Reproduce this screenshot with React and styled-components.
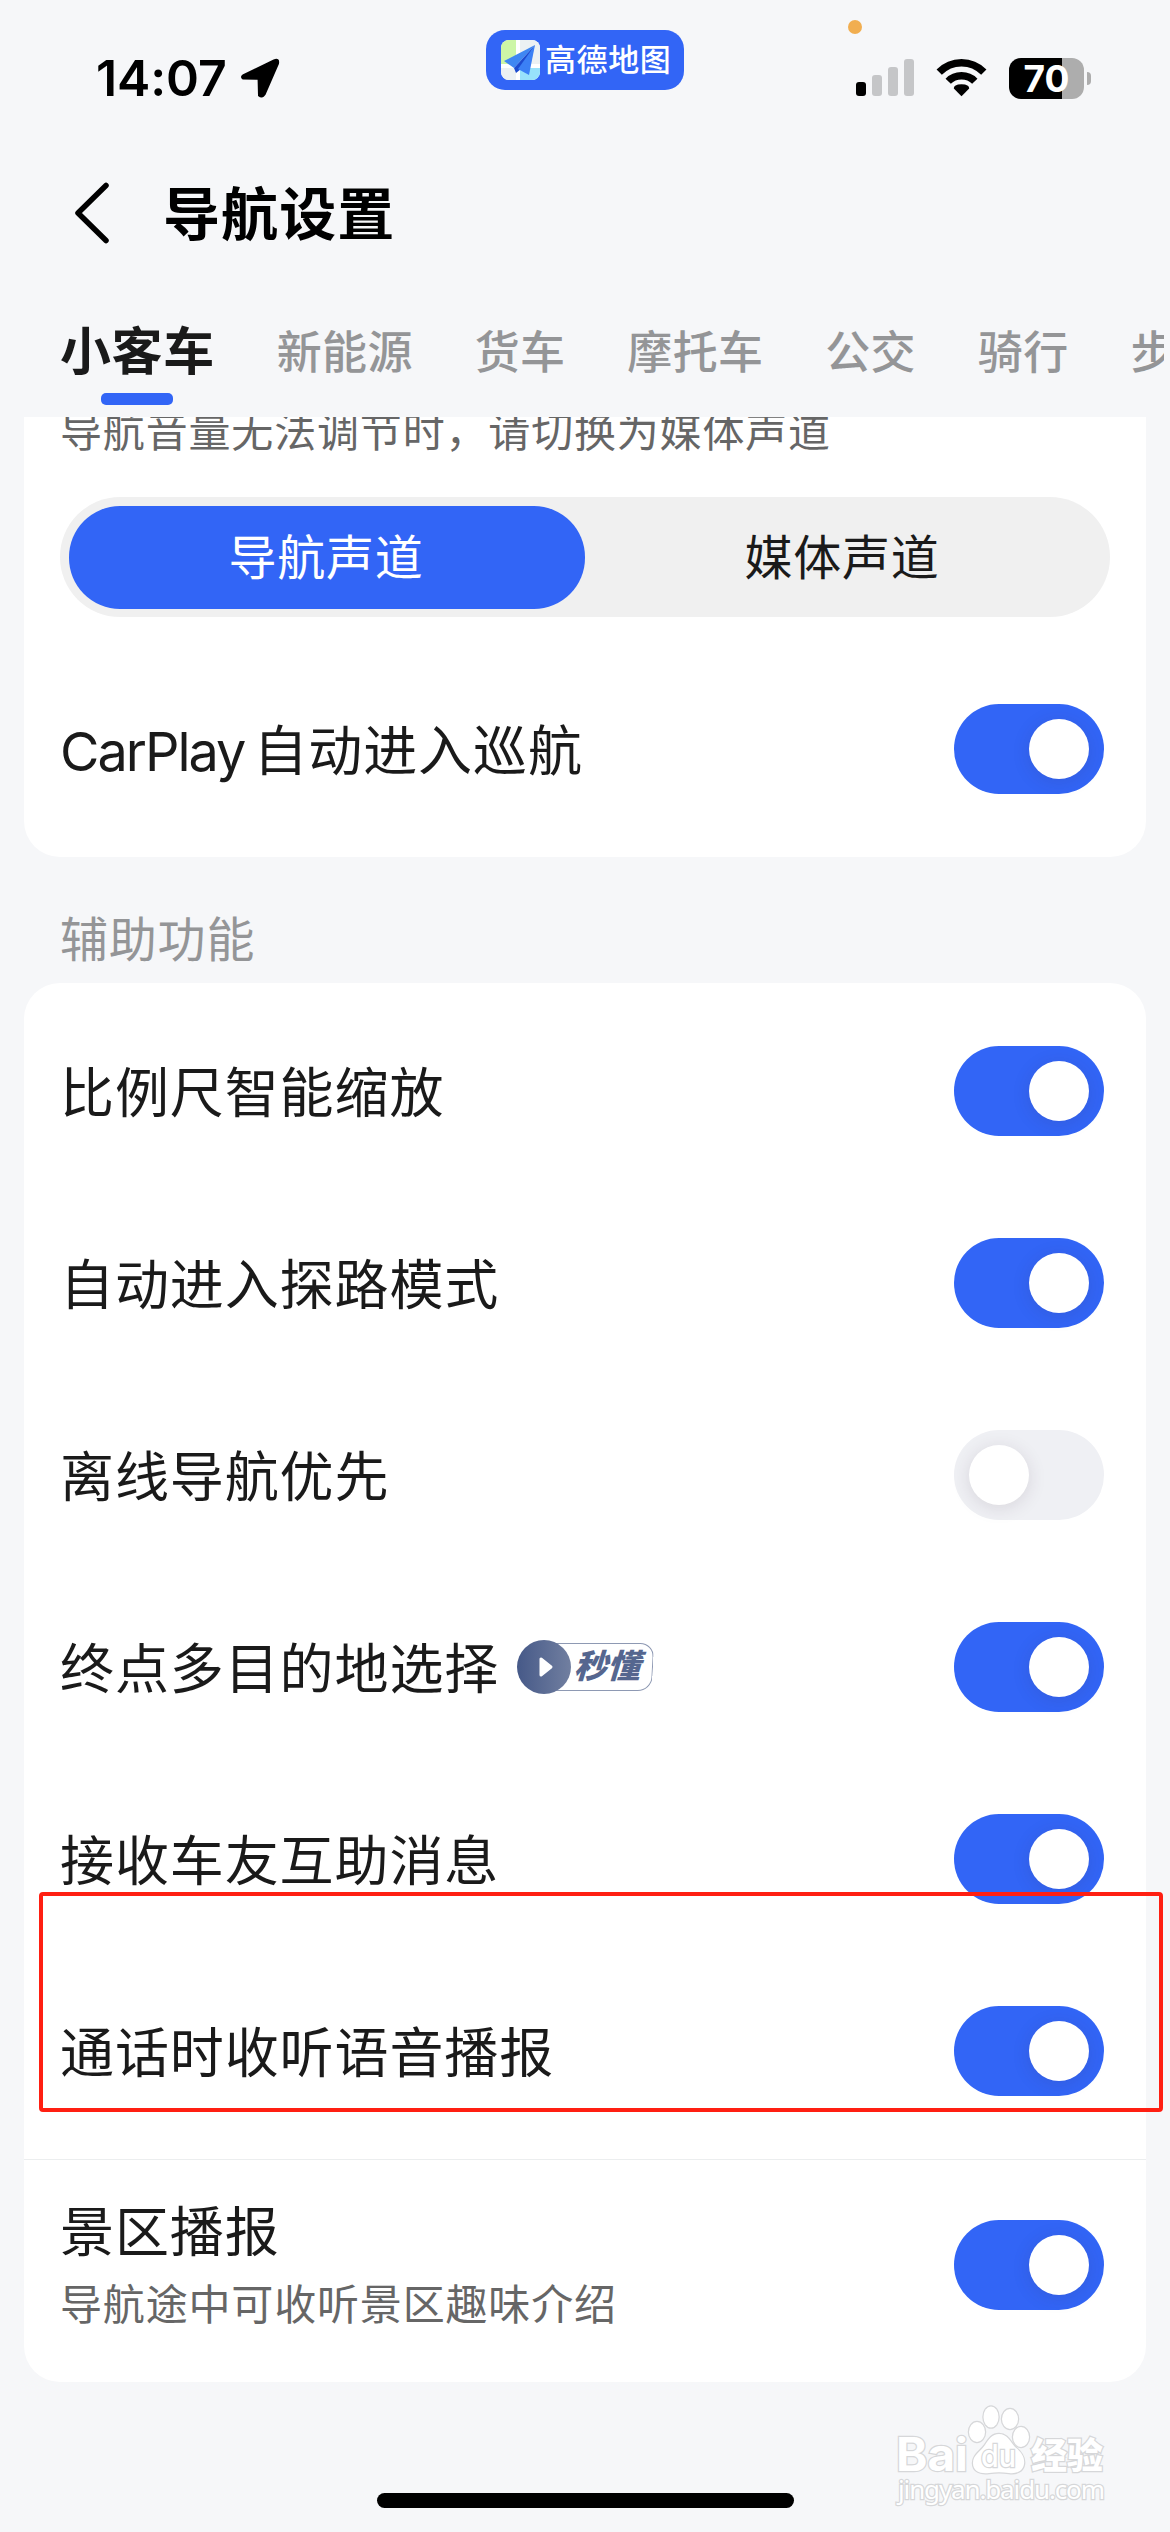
import { useState } from "react";
import styled, { createGlobalStyle, css } from "styled-components";

const GlobalStyle = createGlobalStyle`
  * {
    box-sizing: border-box;
  }
  body {
    margin: 0;
    background-color: #f6f7f9;
    font-family: Inter, "Noto Sans CJK SC", sans-serif;
    color: #1a1a1a;
  }
`;

const Screen = styled.div`
  position: relative;
  width: 1170px;
  height: 2532px;
  overflow: hidden;
  display: flex;
  flex-direction: column;
  background-color: #f6f7f9;
`;

const StatusBar = styled.header`
  height: 153px;
  flex: none;
  display: grid;
  grid-template-columns: 486px 198px 1fr;
  align-items: start;
`;

const Clock = styled.div`
  display: flex;
  align-items: center;
  gap: 13px;
  height: 60px;
  margin: 48px 0 0 96px;
  font-size: 50px;
  font-weight: 600;
  line-height: 60px;
  letter-spacing: -0.1px;
  color: #000;
`;

const AppPill = styled.div`
  display: flex;
  align-items: center;
  gap: 5px;
  height: 60px;
  margin-top: 30px;
  padding-left: 15px;
  border-radius: 19px;
  background-color: #3265f6;
  color: #fff;
  font-size: 31px;
  font-weight: 500;
  line-height: 60px;
  letter-spacing: 0.6px;
  white-space: nowrap;
`;

const StatusIcons = styled.div`
  position: relative;
  display: flex;
  align-items: center;
  height: 42px;
  margin: 57px 0 0 172px;
`;

const MicDot = styled.i`
  position: absolute;
  left: -8px;
  top: -37px;
  width: 14px;
  height: 14px;
  border-radius: 50%;
  background-color: #f1ae50;
`;

const Battery = styled.div`
  width: 75px;
  height: 41px;
  margin-left: 22px;
  border-radius: 12px;
  background: linear-gradient(to right, #000 53px, #adadad 53px);
  color: #fff;
  font-size: 37px;
  font-weight: 700;
  line-height: 42px;
  text-align: center;
`;

const BatteryTip = styled.i`
  width: 4px;
  height: 13px;
  margin-left: 3px;
  border-radius: 0 4px 4px 0;
  background-color: #adadad;
`;

const TitleBar = styled.div`
  height: 120px;
  flex: none;
  display: flex;
  align-items: center;
  padding-left: 74px;
  color: #000;
`;

const Title = styled.h1`
  margin: 3px 0 0 52px;
  font-size: 57px;
  font-weight: 600;
  line-height: 80px;
  letter-spacing: 1.1px;
`;

const Tabs = styled.nav`
  height: 144px;
  width: 1164px;
  flex: none;
  display: flex;
  gap: 62px;
  padding: 38px 0 0 60px;
  overflow: hidden;
`;

const Tab = styled.div`
  flex: none;
  height: 94px;
  display: flex;
  flex-direction: column;
  align-items: center;
  font-size: 45px;
  font-weight: 500;
  line-height: 83px;
  letter-spacing: 0.3px;
  color: #949597;
  ${({ $active }) =>
    $active &&
    css`
      font-size: 51px;
      font-weight: 600;
      line-height: 82px;
      letter-spacing: 0.6px;
      color: #1a1a1a;
      &::after {
        content: "";
        width: 72px;
        height: 12px;
        border-radius: 5px;
        background-color: #3265f6;
      }
    `}
`;

const Content = styled.main`
  height: 2115px;
  overflow: hidden;
  padding: 0 24px;
`;

const Card = styled.section`
  background-color: #fff;
  border-radius: ${({ $clipped }) => ($clipped ? "0 0 36px 36px" : "36px")};
  overflow: hidden;
`;

const Hint = styled.p`
  margin: ${({ $flush }) => ($flush ? "4px 0 0" : "-15px 36px 35px")};
  font-size: 42px;
  line-height: 60px;
  letter-spacing: 0.83px;
  color: #666;
`;

const Segmented = styled.div`
  display: grid;
  grid-template-columns: 1fr 1fr;
  height: 120px;
  margin: 0 36px;
  padding: 9px;
  border-radius: 60px;
  background-color: #f0f0f0;
`;

const Segment = styled.div`
  padding-right: 2px;
  border-radius: 51px;
  font-size: 48px;
  line-height: 103px;
  letter-spacing: 0.8px;
  text-align: center;
  background-color: ${({ $active }) => ($active ? "#3265f6" : "transparent")};
  color: ${({ $active }) => ($active ? "#fff" : "#1a1a1a")};
`;

const Row = styled.div`
  display: flex;
  align-items: center;
  height: 192px;
  padding: 0 42px 0 36px;
`;

const TallRow = styled(Row)`
  height: 210px;
`;

const Group = styled.div`
  padding: ${({ $top = 12 }) => $top}px 0 12px;
`;

const Texts = styled.div`
  margin-top: -6px;
`;

const Label = styled.div`
  padding-top: 5px;
  font-size: 54px;
  line-height: 76px;
  letter-spacing: 0.9px;
`;

const Latin = styled.span`
  margin-right: 9px;
  letter-spacing: -2px;
`;

const SectionTitle = styled.h2`
  height: 126px;
  margin: 0;
  padding: 47px 36px 0;
  font-size: 48px;
  font-weight: 400;
  line-height: 72px;
  letter-spacing: 0.8px;
  color: #949597;
`;

const Divider = styled.hr`
  height: 1px;
  margin: 0;
  border: 0;
  background-color: #eceeef;
`;

const Track = styled.button`
  flex: none;
  width: 150px;
  height: 90px;
  margin-left: auto;
  padding: 15px;
  display: flex;
  justify-content: ${({ $on }) => ($on ? "flex-end" : "flex-start")};
  border: 0;
  border-radius: 45px;
  background-color: ${({ $on }) => ($on ? "#3265f6" : "#eff0f4")};
`;

const Knob = styled.span`
  width: 60px;
  height: 60px;
  border-radius: 50%;
  background-color: #fff;
  box-shadow: 0 3px 18px rgba(60, 40, 60, 0.13);
`;

const Badge = styled.div`
  display: flex;
  align-items: center;
  margin-left: 18px;
`;

const BadgeText = styled.div`
  width: 99px;
  height: 48px;
  margin-left: -17px;
  padding-left: 20px;
  border: 1.5px solid #8e99b3;
  border-left: 0;
  border-radius: 0 14px 14px 0;
  transform: skewX(-3deg);
  color: #55668f;
  font-size: 33px;
  font-weight: 900;
  font-style: italic;
  line-height: 45px;
`;

const PlayIcon = styled.svg`
  position: relative;
  z-index: 1;
`;

const Highlight = styled.div`
  position: absolute;
  left: 39px;
  top: 1892px;
  width: 1124px;
  height: 220px;
  border: 4px solid #ff1f12;
  border-radius: 4px;
`;

const Watermark = styled.svg`
  position: absolute;
  left: 881px;
  top: 2390px;
`;

const HomeIndicator = styled.div`
  position: absolute;
  left: 377px;
  top: 2493px;
  width: 417px;
  height: 15px;
  border-radius: 8px;
  background-color: #000;
`;

const TABS = ["小客车", "新能源", "货车", "摩托车", "公交", "骑行", "步行"];

const OPTIONS = [
  { name: "比例尺智能缩放", on: true },
  { name: "自动进入探路模式", on: true },
  { name: "离线导航优先", on: false },
  { name: "终点多目的地选择", on: true, badge: "秒懂" },
  { name: "接收车友互助消息", on: true },
  { name: "通话时收听语音播报", on: true },
];

const Toggle = ({ initial }) => {
  const [on, setOn] = useState(initial);

  return (
    <Track $on={on} role="switch" aria-checked={on} onClick={() => setOn(!on)}>
      <Knob />
    </Track>
  );
};

const LocationArrow = () => (
  <svg width="40" height="40" viewBox="0 0 40 40">
    <path
      d="M3 17.5 34 2.3Q39 .2 38 5.5L24.5 36.5Q22 40 19 37.5L18.6 22Q18.6 20.7 17.5 20.7L3 20.5Q1 19 3 17.5Z"
      fill="#000"
      stroke="#000"
      strokeWidth="2"
      strokeLinejoin="round"
    />
  </svg>
);

const MapLogo = () => (
  <svg width="39" height="40" viewBox="0 0 39 40">
    <clipPath id="logo">
      <rect width="39" height="40" rx="8" />
    </clipPath>
    <g clipPath="url(#logo)">
      <rect width="39" height="40" fill="#fff" />
      <path d="M0 0h15v24H0z" fill="#cdf6a6" />
      <path d="M19 0h20v24H19zM0 28h15v12H0z" fill="#ecf1f3" />
      <path d="M19 28h20v12H19z" fill="#98e2fb" />
      <path d="M34 5 3 21l10 7z" fill="#3f87f2" />
      <path d="M34 5 13 28l2 5 5-4z" fill="#1c4bd0" />
      <path d="M34 5 17 29l11 6z" fill="#3b80f5" />
    </g>
  </svg>
);

const Signal = () => (
  <svg width="58" height="42" viewBox="0 0 58 42">
    <rect y="25" width="10" height="14" rx="3" fill="#000" />
    <g fill="#c5c6c8">
      <rect x="16" y="18" width="10" height="21" rx="3" />
      <rect x="32" y="10" width="10" height="29" rx="3" />
      <rect x="48" y="2" width="10" height="37" rx="3" />
    </g>
  </svg>
);

const WifiIcon = styled.svg`
  margin-left: 22px;
`;

const Wifi = () => (
  <WifiIcon width="51" height="42" viewBox="0 0 51 42">
    <path d="M25.5 39.3 17.8 31.5Q17.5 27.5 25.5 27.3Q33.500 27.5 33.2 31.5Z" />
    <path d="M3.2 15.2Q12.5 5.7 25.5 5.7T47.8 15.2" fill="none" stroke="#000" strokeWidth="7.4" />
    <path d="M12.2 24.2Q17.5 18.7 25.5 18.7T38.8 24.2" fill="none" stroke="#000" strokeWidth="7.4" />
  </WifiIcon>
);

const BackIcon = () => (
  <svg width="37" height="64" viewBox="0 0 37 64">
    <path
      d="M32 4.5 4 32 32 59.5"
      fill="none"
      stroke="#000"
      strokeWidth="5.5"
      strokeLinecap="round"
      strokeLinejoin="round"
    />
  </svg>
);

const PlayBadge = ({ text }) => (
  <Badge>
    <PlayIcon width="54" height="54" viewBox="0 0 54 54">
      <linearGradient id="play">
        <stop offset="0" stopColor="#465988" />
        <stop offset="1" stopColor="#717fa0" />
      </linearGradient>
      <circle cx="27" cy="27" r="27" fill="url(#play)" />
      <path
        d="M24 19v16l10-8z"
        fill="#fff"
        stroke="#fff"
        strokeWidth="3"
        strokeLinejoin="round"
      />
    </PlayIcon>
    <BadgeText>{text}</BadgeText>
  </Badge>
);

const BaiduMark = () => (
  <Watermark width="240" height="130" viewBox="0 0 240 130">
    <g
      fill="#fff"
      stroke="#d6d7d9"
      strokeWidth="2.5"
      paintOrder="stroke"
      fontFamily="Inter, 'Noto Sans CJK SC', sans-serif"
    >
      <text x="15" y="81" fontSize="46" fontWeight="700" textLength="72" lengthAdjust="spacingAndGlyphs">
        Bai
      </text>
      <ellipse cx="96" cy="42" rx="8" ry="10" />
      <ellipse cx="110" cy="27" rx="7.5" ry="10.5" />
      <ellipse cx="129" cy="29" rx="8" ry="10" />
      <ellipse cx="140" cy="47" rx="8" ry="10" />
      <path d="M118 44C126 44 129 51 134 57C140 62 144 67 143 74C142 81 136 84 128 83C121 82 115 82 108 83C100 84 92 82 92 73C92 65 99 62 104 55C108 49 111 44 118 44Z" />
      <text x="100" y="77" fontSize="31" fontWeight="500" textLength="35" lengthAdjust="spacingAndGlyphs">
        du
      </text>
      <text x="150" y="79" fontSize="36" fontWeight="900">
        经验
      </text>
      <text x="17" y="109" fontSize="26" textLength="207" fontFamily="'Noto Sans', sans-serif">
        jingyan.baidu.com
      </text>
    </g>
  </Watermark>
);

export default function App() {
  return (
    <>
      <GlobalStyle />
      <Screen>
        <StatusBar>
          <Clock>
            14:07
            <LocationArrow />
          </Clock>
          <AppPill>
            <MapLogo />
            高德地图
          </AppPill>
          <StatusIcons>
            <MicDot />
            <Signal />
            <Wifi />
            <Battery>70</Battery>
            <BatteryTip />
          </StatusIcons>
        </StatusBar>
        <TitleBar>
          <BackIcon />
          <Title>导航设置</Title>
        </TitleBar>
        <Tabs>
          {TABS.map((tab, i) => (
            <Tab key={tab} $active={i === 0}>
              {tab}
            </Tab>
          ))}
        </Tabs>
        <Content>
          <Card $clipped>
            <Hint>导航音量无法调节时，请切换为媒体声道</Hint>
            <Segmented>
              <Segment $active>导航声道</Segment>
              <Segment>媒体声道</Segment>
            </Segmented>
            <Group $top={36}>
              <Row>
                <Label>
                  <Latin>CarPlay</Latin>自动进入巡航
                </Label>
                <Toggle initial />
              </Row>
            </Group>
          </Card>
          <SectionTitle>辅助功能</SectionTitle>
          <Card>
            <Group>
              {OPTIONS.map((option) => (
                <Row key={option.name}>
                  <Label>{option.name}</Label>
                  {option.badge && <PlayBadge text={option.badge} />}
                  <Toggle initial={option.on} />
                </Row>
              ))}
            </Group>
            <Divider />
            <Group $top={0}>
              <TallRow>
                <Texts>
                  <Label>景区播报</Label>
                  <Hint $flush>导航途中可收听景区趣味介绍</Hint>
                </Texts>
                <Toggle initial />
              </TallRow>
            </Group>
          </Card>
        </Content>
        <Highlight />
        <BaiduMark />
        <HomeIndicator />
      </Screen>
    </>
  );
}
